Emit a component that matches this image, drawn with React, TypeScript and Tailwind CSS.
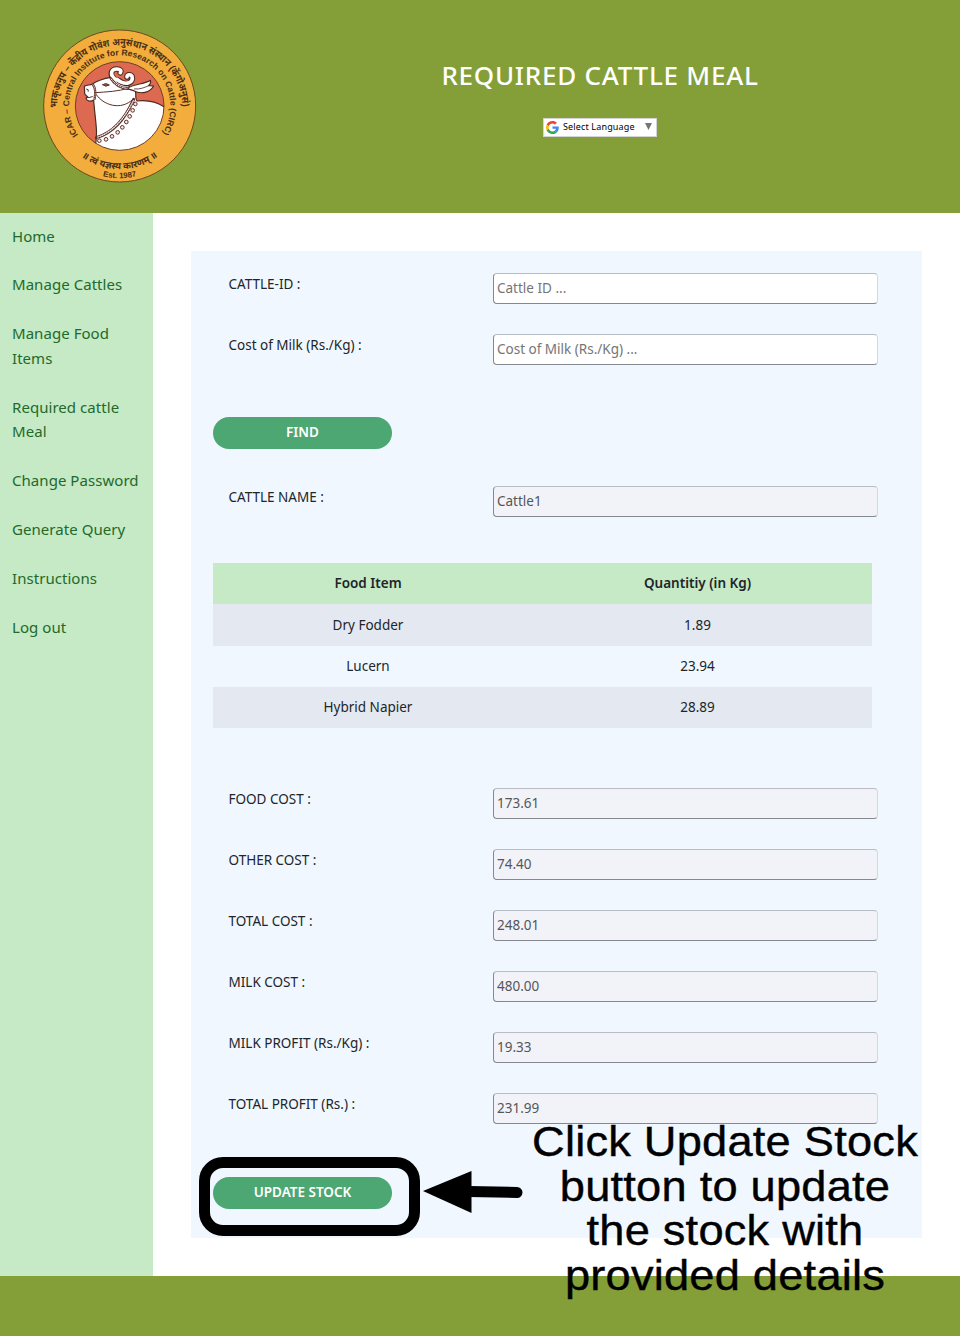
import React from "react";

const NAV = [
  "Home",
  "Manage Cattles",
  "Manage Food Items",
  "Required cattle Meal",
  "Change Password",
  "Generate Query",
  "Instructions",
  "Log out",
];

const FOODS = [
  ["Dry Fodder", "1.89"],
  ["Lucern", "23.94"],
  ["Hybrid Napier", "28.89"],
];

const COSTS = [
  ["FOOD COST :", "173.61"],
  ["OTHER COST :", "74.40"],
  ["TOTAL COST :", "248.01"],
  ["MILK COST :", "480.00"],
  ["MILK PROFIT (Rs./Kg) :", "19.33"],
  ["TOTAL PROFIT (Rs.) :", "231.99"],
];

const BEADS = [
  [301, 252],
  [293, 271],
  [284, 289],
  [274, 306],
  [262, 322],
  [248, 337],
  [231, 349],
  [213, 358],
  [193, 362],
];

function Logo() {
  return (
    <svg viewBox="0 0 510 510" className="h-[170px] w-[170px]">
      <defs>
        <path id="arc-hindi" d="M66 264 A188 188 0 0 1 442 264" />
        <path id="arc-english" d="M129.500 345.200 A152 152 0 1 1 378.500 345.200" />
        <path id="arc-motto" d="M102 373 A192 192 0 0 0 406 373" />
        <path id="arc-est" d="M154 450 A216 216 0 0 0 354 450" />
        <clipPath id="disc">
          <circle cx="254" cy="258" r="133" />
        </clipPath>
      </defs>
      <circle cx="254" cy="258" r="228" fill="#f2ad3c" stroke="#6b4a1c" strokeWidth="3" />
      <circle cx="254" cy="258" r="133" fill="#dd6a50" />
      <g clipPath="url(#disc)" stroke="#4a2a22" strokeWidth="3.5" strokeLinejoin="round" strokeLinecap="round">
        <path
          fill="#fff"
          d="M148 199 C156 194 166 196 172 192 C186 182 206 176 226 172 L250 174 L284 200 L300 212 C306 222 298 232 306 243 C334 240 368 246 392 264 L400 410 L176 410 C182 380 186 350 184 324 C182 296 178 270 176 240 C168 246 156 244 153 236 L158 230 C151 226 147 222 149 216 Z"
        />
        <path fill="none" strokeWidth="17" d="M239 178 C222 164 228 147 246 147 C255 147 260 152 256 158" />
        <path fill="none" strokeWidth="17" d="M252 182 C274 200 297 187 291 169 C286 161 276 164 276 171" />
        <path fill="none" stroke="#fff" strokeWidth="11" d="M243 180 C222 164 228 147 246 147 C255 147 260 152 256 158" />
        <path fill="none" stroke="#fff" strokeWidth="11" d="M246 178 C274 200 297 187 291 169 C286 161 276 164 276 171" />
        <path fill="#fff" d="M276 206 C296 190 328 194 346 181 C349 188 346 192 341 197 L356 198 C344 218 318 224 296 212 Z" />
        <path fill="none" d="M298 207 C316 209 332 201 341 197" strokeWidth="2.500" />
      </g>
      <g fill="none" stroke="#5e3028" strokeLinecap="round">
        <path d="M174 194 C181 204 182 220 179 236" strokeWidth="7" />
        <path d="M174 194 C181 204 182 220 179 236" stroke="#e6d2ca" strokeWidth="2.500" strokeDasharray="3 4" />
        <path d="M180 218 C214 216 250 214 280 205 M184 224 C204 254 256 274 294 238" strokeWidth="3" />
        <path d="M228 176 C238 192 256 204 278 206" strokeWidth="8" />
        <path d="M229 177 C239 192 256 203 276 205" stroke="#fff" strokeWidth="3" strokeDasharray="3 4" />
        <path d="M296 238 C276 284 242 336 184 353" strokeWidth="9" />
        <path d="M295 242 C274 284 242 334 186 352" stroke="#fff" strokeWidth="3.500" strokeDasharray="3 4" />
        <path d="M203 194 Q212 187 223 195 Q212 203 203 194" strokeWidth="3" fill="#8b6a60" />
        <path d="M155 207 q7 0 5 7 M153 232 Q162 235 172 230" strokeWidth="3" />
      </g>
      <g fill="#f4e9e4" stroke="#5e3028" strokeWidth="3">
        {BEADS.map(([x, y]) => (
          <circle key={x} cx={x} cy={y} r="5.500" />
        ))}
      </g>
      <circle cx="254" cy="258" r="133" fill="none" stroke="#70401f" strokeWidth="3" />
      <g fill="#4a2d12" className="font-['Liberation_Sans','Noto_Sans_Devanagari',sans-serif] font-bold">
        <text fontSize="30">
          <textPath href="#arc-hindi" textLength="586" lengthAdjust="spacingAndGlyphs">भाकृअनुप – केंद्रीय गोवंश अनुसंधान संस्थान (केंगोअनुसं)</textPath>
        </text>
        <text fontSize="25.500">
          <textPath href="#arc-english" textLength="656">ICAR – Central Institute for Research on Cattle (CIRC)</textPath>
        </text>
        <text fontSize="28" textAnchor="middle">
          <textPath href="#arc-motto" startOffset="50%">॥ त्वं यज्ञस्य कारणम् ॥</textPath>
        </text>
        <text fontSize="23.500" textAnchor="middle">
          <textPath href="#arc-est" startOffset="50%">Est. 1987</textPath>
        </text>
      </g>
    </svg>
  );
}

function GoogleMark() {
  return (
    <svg viewBox="0 0 48 48" className="h-[13px] w-[13px]">
      <path fill="#EA4335" d="M24 9.5c3.5 0 6.700 1.200 9.200 3.600l6.900-6.900C35.900 2.400 30.500 0 24 0 14.600 0 6.500 5.400 2.600 13.200l8 6.200C12.400 13.700 17.700 9.500 24 9.500z" />
      <path fill="#4285F4" d="M47 24.600c0-1.600-.200-3.100-.400-4.600H24v9h12.900c-.6 3-2.300 5.500-4.800 7.200l7.700 6C44.400 38 47 31.800 47 24.600z" />
      <path fill="#FBBC05" d="M10.500 28.600c-.5-1.500-.8-3-.8-4.600s.3-3.100.8-4.600l-8-6.200C.900 16.500 0 20.100 0 24s.9 7.500 2.600 10.800l7.900-6.200z" />
      <path fill="#34A853" d="M24 48c6.500 0 11.900-2.100 15.900-5.800l-7.700-6c-2.200 1.500-4.900 2.300-8.200 2.300-6.300 0-11.600-4.200-13.500-9.900l-8 6.200C6.500 42.600 14.600 48 24 48z" />
    </svg>
  );
}

function Field({ label, value, placeholder }: { label: string; value?: string; placeholder?: string }) {
  return (
    <div className="flex h-[61px] items-start">
      <label className="w-[264.500px] shrink-0 text-[13.5px] leading-[22px] text-[#212529]">{label}</label>
      <input
        readOnly={value !== undefined}
        defaultValue={value}
        placeholder={placeholder}
        className="h-[30.500px] w-[384.500px] rounded-[4px] border border-t-[#b9bcc2] border-r-[#d5d9df] border-b-[#85888e] border-l-[#85888e] bg-white pr-1 pb-[1px] pl-[3px] text-[13.5px] text-[#55565a] placeholder:text-[#757575] read-only:bg-[#f1f3f8]"
      />
    </div>
  );
}

function Pill({ children }: { children: React.ReactNode }) {
  return (
    <button className="flex h-8 w-[179px] items-center justify-center rounded-full bg-[#4da772] pb-px text-[13.500px] font-semibold text-white">
      {children}
    </button>
  );
}

export default function App() {
  return (
    <div className="relative flex h-[1336px] w-[960px] flex-col overflow-hidden bg-white font-['Noto_Sans',sans-serif]">
      <header className="flex h-[213px] shrink-0 bg-[#849e38] pl-[35px]">
        <div className="w-[205px] pt-5">
          <Logo />
        </div>
        <div className="flex w-[720px] flex-col items-center pt-[58px]">
          <h1 className="text-[26px] leading-[34px] font-medium tracking-[0.750px] whitespace-nowrap text-white">REQUIRED CATTLE MEAL</h1>
          <div className="mt-[26px] flex h-[19px] w-[114px] items-center border border-[#d5d5d5] bg-white pl-[2px] text-[9px] text-black">
            <GoogleMark />
            <span className="-mt-[2px] ml-1 w-[82px] tracking-[0.150px] whitespace-nowrap">Select Language</span>
            <svg viewBox="0 0 7 7" className="-mt-[2px] h-[7px] w-[7px]">
              <path d="M0 0h7L3.500 7z" fill="#757575" />
            </svg>
          </div>
        </div>
      </header>

      <div className="flex h-[1063px] shrink-0">
        <nav className="flex w-[153px] flex-col gap-6 bg-[#c5eac5] pt-[10.500px] pl-3">
          {NAV.map((item) => (
            <a key={item} className="w-[132px] text-[15px] leading-[24.800px] tracking-[0.050px] text-[#23692b]">
              {item}
            </a>
          ))}
        </nav>

        <main className="mt-[38px] ml-[38px] h-[987px] w-[731px] bg-[#f0f7ff] pt-[22px]">
          <div className="pl-[37.500px]">
            <Field label="CATTLE-ID :" placeholder="Cattle ID ..." />
            <Field label="Cost of Milk (Rs./Kg) :" placeholder="Cost of Milk (Rs./Kg) ..." />
          </div>
          <div className="mt-[22px] pl-[22px]">
            <Pill>FIND</Pill>
          </div>
          <div className="mt-[37px] pl-[37.500px]">
            <Field label="CATTLE NAME :" value="Cattle1" />
          </div>
          <table className="mt-4 ml-[22px] w-[659px] table-fixed text-center text-[13.500px] text-[#212529]">
            <colgroup>
              <col className="w-[310px]" />
              <col />
            </colgroup>
            <thead>
              <tr className="h-[41px] bg-[#c5eac5]">
                <th className="font-semibold">Food Item</th>
                <th className="font-semibold">Quantitiy (in Kg)</th>
              </tr>
            </thead>
            <tbody>
              {FOODS.map(([name, qty]) => (
                <tr key={name} className="h-[41px] first:h-[42px] odd:bg-[#e4e9f1]">
                  <td>{name}</td>
                  <td>{qty}</td>
                </tr>
              ))}
            </tbody>
          </table>
          <div className="mt-[60px] pl-[37.500px]">
            {COSTS.map(([label, value]) => (
              <Field key={label} label={label} value={value} />
            ))}
          </div>
          <div className="mt-[23px] pl-[22px]">
            <Pill>UPDATE STOCK</Pill>
          </div>
        </main>
      </div>

      <footer className="h-[60px] shrink-0 bg-[#849e38]" />

      <div className="absolute top-[1157px] left-[199px] h-[79px] w-[221px] rounded-[24px] border-[11px] border-black" />
      <svg viewBox="0 0 100 42" className="absolute top-[1171px] left-[423px] h-[42px] w-[100px]">
        <path d="M0 20L48.500 0V42z" />
        <path d="M46 20.500L94 21.500" stroke="#000" strokeWidth="11" strokeLinecap="round" />
      </svg>
      <p className="absolute top-[1119px] left-[525px] w-[400px] scale-x-[1.052] text-center font-['Liberation_Sans',sans-serif] text-[43px] leading-[44.600px] tracking-[0.200px] whitespace-nowrap text-black [-webkit-text-stroke:0.4px_#000]">
        Click Update Stock
        <br />
        button to update
        <br />
        the stock with
        <br />
        provided details
      </p>
    </div>
  );
}
